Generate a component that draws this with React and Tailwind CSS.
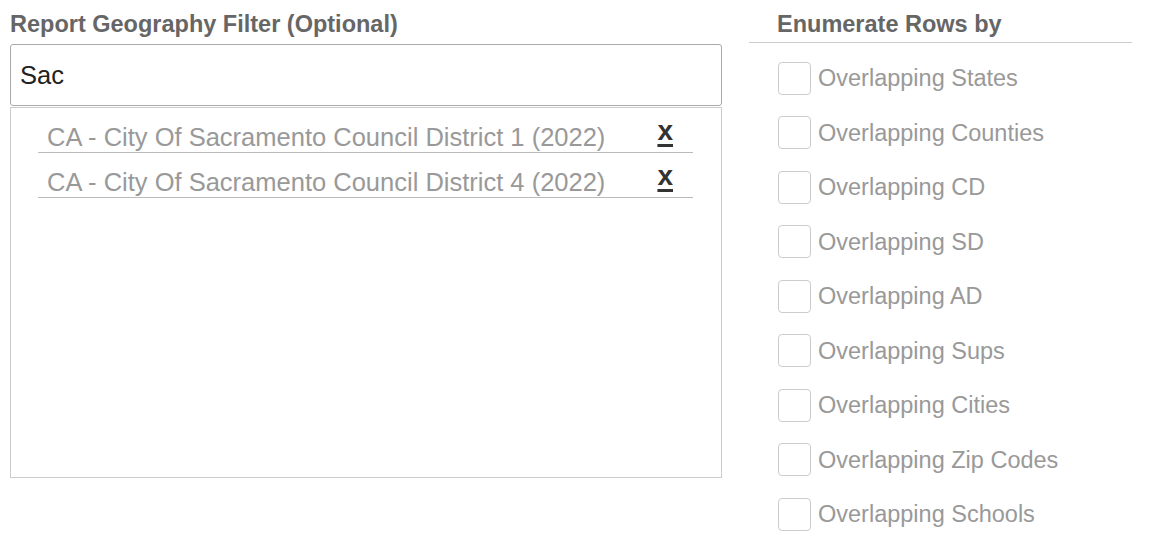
import { useState } from 'react';

const GEOGRAPHIES = [
  'CA - City Of Sacramento Council District 1 (2022)',
  'CA - City Of Sacramento Council District 4 (2022)',
];

const ENUMERATE_OPTIONS = [
  'Overlapping States',
  'Overlapping Counties',
  'Overlapping CD',
  'Overlapping SD',
  'Overlapping AD',
  'Overlapping Sups',
  'Overlapping Cities',
  'Overlapping Zip Codes',
  'Overlapping Schools',
];

export default function App() {
  const [query, setQuery] = useState('Sac');
  const [selected, setSelected] = useState(GEOGRAPHIES);
  const [checked, setChecked] = useState({});

  const removeGeo = (name) => setSelected((list) => list.filter((g) => g !== name));
  const toggle = (name) => setChecked((c) => ({ ...c, [name]: !c[name] }));

  return (
    <div className="flex gap-[27px] bg-white pl-[10px] font-['Liberation_Sans',Arial,sans-serif]">
      {/* Geography filter */}
      <div className="w-[712px] shrink-0">
        <h3 className="pt-[9px] text-[23.5px] font-bold leading-[30px] text-[#666]">
          Report Geography Filter (Optional)
        </h3>
        <input
          value={query}
          onChange={(e) => setQuery(e.target.value)}
          className="mt-[5px] block h-[62px] w-full rounded-[3px] border border-[#aaa] px-[9px] text-[25.5px] text-[#222] outline-none"
        />
        <div className="mt-[1px] h-[371px] border border-[#ccc] pl-[27px]">
          <ul className="w-[655px]">
            {selected.map((geo) => (
              <li
                key={geo}
                className="flex items-start justify-between border-b border-[#bbb] pt-[14px] pl-[9px] pr-[20px]"
              >
                <span className="text-[25.5px] leading-[30px] text-[#999]">{geo}</span>
                <button
                  onClick={() => removeGeo(geo)}
                  className="-mt-[6px] text-[28px] font-bold leading-[30px] text-[#333] underline decoration-[3px] underline-offset-[4px]"
                >
                  x
                </button>
              </li>
            ))}
          </ul>
        </div>
      </div>

      {/* Row enumeration */}
      <div className="w-[383px] shrink-0">
        <h3 className="border-b border-[#ccc] pl-[28px] pt-[9px] pb-[3px] text-[23.5px] font-bold leading-[30px] text-[#666]">
          Enumerate Rows by
        </h3>
        <div className="mt-[8px] pl-[29px]">
          {ENUMERATE_OPTIONS.map((opt) => (
            <label key={opt} className="flex h-[54.5px] cursor-pointer items-center gap-[7px]">
              <input
                type="checkbox"
                checked={!!checked[opt]}
                onChange={() => toggle(opt)}
                className="h-[33px] w-[33px] shrink-0 appearance-none rounded-[4px] border border-[#ccc] bg-white checked:bg-[#3b82f6]"
              />
              <span className="text-[23.5px] leading-[30px] text-[#999]">{opt}</span>
            </label>
          ))}
        </div>
      </div>
    </div>
  );
}
